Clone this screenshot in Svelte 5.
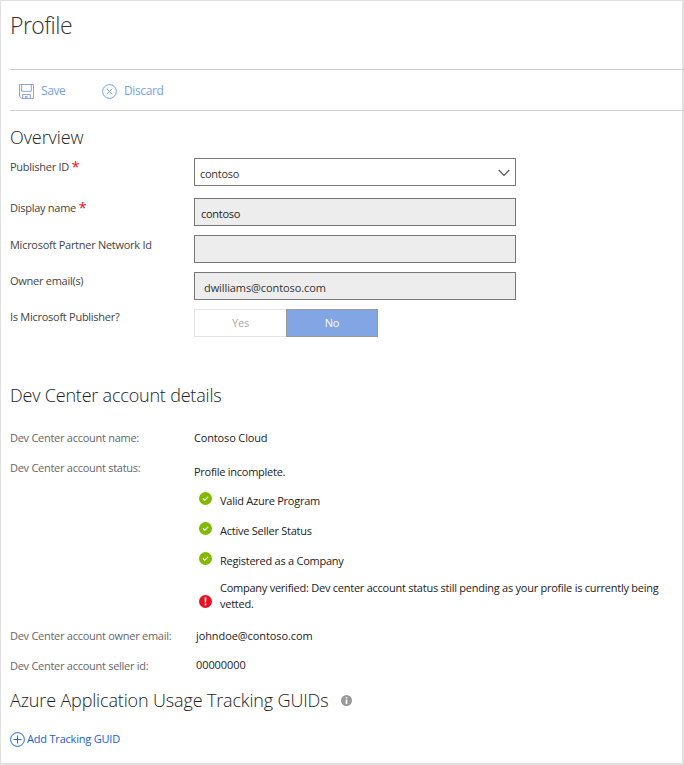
<script>
  const statuses = ['Valid Azure Program', 'Active Seller Status', 'Registered as a Company'];
</script>

<main class="page">
  <h1>Profile</h1>

  <div class="toolbar">
    <button class="tool save">
      <svg width="15" height="15" viewBox="0 0 15 15" fill="none" stroke="#8f9fe0">
        <path d="M.5 .5H14.5V14.5H2.8L.5 12.2ZM2.7 .5V7.3H12.3V.5M3.7 14.5V10.5H11.3V14.5M6.3 14.5V12.5H8V14.5" />
      </svg>
      <span>Save</span>
    </button>
    <button class="tool discard">
      <svg width="15" height="15" viewBox="0 0 15 15" fill="none" stroke="#78a0e8">
        <circle cx="7.5" cy="7.5" r="6.9" />
        <path d="M4.7 4.7L10.3 10.3M10.3 4.7L4.7 10.3" />
      </svg>
      <span>Discard</span>
    </button>
  </div>

  <section class="overview">
    <h2>Overview</h2>
    <div class="row first">
      <label for="publisher">Publisher ID <b>*</b></label>
      <div class="field select" id="publisher">
        <span>contoso</span>
        <svg width="12" height="8" viewBox="0 0 12 8" fill="none" stroke="#555" stroke-width="1.2"><path d="M.7 1L6 6.4L11.3 1" /></svg>
      </div>
    </div>
    <div class="row">
      <label for="display" class="lower">Display name <b>*</b></label>
      <div class="field display" id="display"><span>contoso</span></div>
    </div>
    <div class="row">
      <label for="network" class="lower">Microsoft Partner Network Id</label>
      <div class="field" id="network"></div>
    </div>
    <div class="row">
      <label for="owner">Owner email(s)</label>
      <div class="field owner" id="owner"><span>dwilliams@contoso.com</span></div>
    </div>
    <div class="row last">
      <label for="toggle">Is Microsoft Publisher?</label>
      <div class="toggle" id="toggle"><span>Yes</span><span class="on">No</span></div>
    </div>
  </section>

  <section class="details">
    <h2>Dev Center account details</h2>
    <dl>
      <div class="pair name"><dt>Dev Center account name:</dt><dd>Contoso Cloud</dd></div>
      <div class="pair status">
        <dt>Dev Center account status:</dt>
        <dd>
          <p>Profile incomplete.</p>
          <ul>
            {#each statuses as status}
              <li>
                <svg width="13" height="13" viewBox="0 0 13 13" fill="none">
                  <circle cx="6.5" cy="6.5" r="6.5" fill="#7fba00" />
                  <path d="M3.9 6.4L5.8 8.2L9.2 4.8" stroke="#fff" stroke-width="1.2" />
                </svg>
                <span>{status}</span>
              </li>
            {/each}
            <li class="pending">
              <svg width="13" height="13" viewBox="0 0 13 13">
                <circle cx="6.5" cy="6.5" r="6.5" fill="#e81123" />
                <path d="M5.6 2.6H7.4L7.1 7.6H5.9ZM5.7 8.6H7.3V10.2H5.7Z" fill="#fff" />
              </svg>
              <span>Company verified: Dev center account status still pending as your profile is currently being<br />vetted.</span>
            </li>
          </ul>
        </dd>
      </div>
      <div class="pair email"><dt>Dev Center account owner email:</dt><dd>johndoe@contoso.com</dd></div>
      <div class="pair seller"><dt>Dev Center account seller id:</dt><dd>00000000</dd></div>
    </dl>
  </section>

  <section class="guids">
    <h2>
      <span>Azure Application Usage Tracking GUIDs</span>
      <svg width="11" height="11" viewBox="0 0 11 11">
        <circle cx="5.5" cy="5.5" r="5.5" fill="#999" />
        <path d="M4.7 2H6.3V3.5H4.7ZM4.7 4.5H6.3V9H4.7Z" fill="#fff" />
      </svg>
    </h2>
    <button class="add">
      <svg width="15" height="15" viewBox="0 0 15 15" fill="none" stroke="#2468d2">
        <circle cx="7.5" cy="7.5" r="6.9" />
        <path d="M7.5 3.5V11.5M3.5 7.5H11.5" />
      </svg>
      <span>Add Tracking GUID</span>
    </button>
  </section>
</main>

<style>
  :global(body) { background: #fff; }
  .page {
    box-sizing: border-box;
    width: 684px;
    height: 765px;
    padding-left: 9px;
    border: solid #e0e0e0;
    border-width: 1px 2px 2px 1px;
    font: 11px/16px "Open Sans", "Noto Sans", sans-serif;
    letter-spacing: -0.27px;
    color: #333;
    background: #fff;
  }
  h1, h2, dl, dd, ul, p { margin: 0; padding: 0; }
  h1 {
    height: 68px;
    padding-top: 8px;
    box-sizing: border-box;
    font-size: 23px;
    line-height: 32px;
    font-weight: 300;
    letter-spacing: -0.55px;
  }
  h2 {
    font-size: 18px;
    line-height: 24px;
    font-weight: 300;
    letter-spacing: -0.2px;
    color: #222;
  }
  button {
    display: flex;
    align-items: center;
    padding: 0;
    border: 0;
    background: none;
    font: inherit;
    letter-spacing: inherit;
  }
  .toolbar {
    display: flex;
    height: 40px;
    margin-right: -2px;
    padding-left: 9px;
    border-top: 1px solid #c9c9c9;
    border-bottom: 1px solid #d0d0d0;
  }
  .tool { padding-top: 3px; color: #78a0e8; font-size: 12px; letter-spacing: -0.38px; }
  .tool span { margin-top: -2px; }
  .save { width: 83px; gap: 7px; }
  .discard { gap: 7px; }
  .overview { box-sizing: border-box; height: 258px; padding-top: 14px; }
  .overview h2 { height: 33px; letter-spacing: -0.08px; }
  .row { display: grid; grid-template-columns: 184px 322px; height: 37px; align-items: start; }
  .row.first { height: 40px; }
  .row label { padding-top: 1px; color: #444; }
  .row label.lower { padding-top: 2px; }
  .row.last label { padding-top: 0; }
  b { font-weight: 400; font-size: 15px; line-height: 10px; color: #e81123; vertical-align: -1px; }
  .field {
    box-sizing: border-box;
    display: flex;
    align-items: center;
    height: 28px;
    padding: 3px 5px 0;
    border: 1px solid #777;
    background: #ededed;
  }
  .select { justify-content: space-between; background: #fff; }
  .select svg { margin-top: -2px; }
  .display { padding-left: 6px; color: #222; }
  .owner { padding: 4px 0 0 9px; letter-spacing: -0.09px; }
  .toggle { display: flex; width: 184px; height: 28px; }
  .toggle span {
    box-sizing: border-box;
    width: 92px;
    border: 1px solid #e4e4e4;
    border-right: 0;
    text-align: center;
    line-height: 26px;
    color: #a8a8a8;
  }
  .toggle .on { border: 1px solid #999; background: #82a5e3; color: #fff; }
  .details { padding-top: 14px; }
  .details h2 { height: 47px; }
  .pair { display: grid; grid-template-columns: 184px 1fr; }
  dt { color: #666; }
  dd { color: #222; }
  .name dd { letter-spacing: -0.15px; }
  .name, .email { height: 30px; }
  .status { height: 168px; }
  .status p { padding-top: 4px; }
  ul { list-style: none; padding: 13px 0 0 5px; }
  li { display: flex; gap: 8px; height: 30px; }
  li span { white-space: nowrap; letter-spacing: -0.25px; }
  li:not(.pending) svg { margin-top: -1px; }
  .pending { margin-top: -3px; }
  .pending svg { margin-top: 15px; flex: none; }
  .email dd, .seller dd { padding-left: 2px; letter-spacing: -0.09px; }
  .seller { height: 30px; }
  .seller dd { margin-top: -1px; }
  .guids h2 { display: flex; align-items: center; gap: 13px; letter-spacing: -0.15px; }
  .add { margin-top: 19px; gap: 2px; color: #1560d0; letter-spacing: -0.2px; }
</style>
